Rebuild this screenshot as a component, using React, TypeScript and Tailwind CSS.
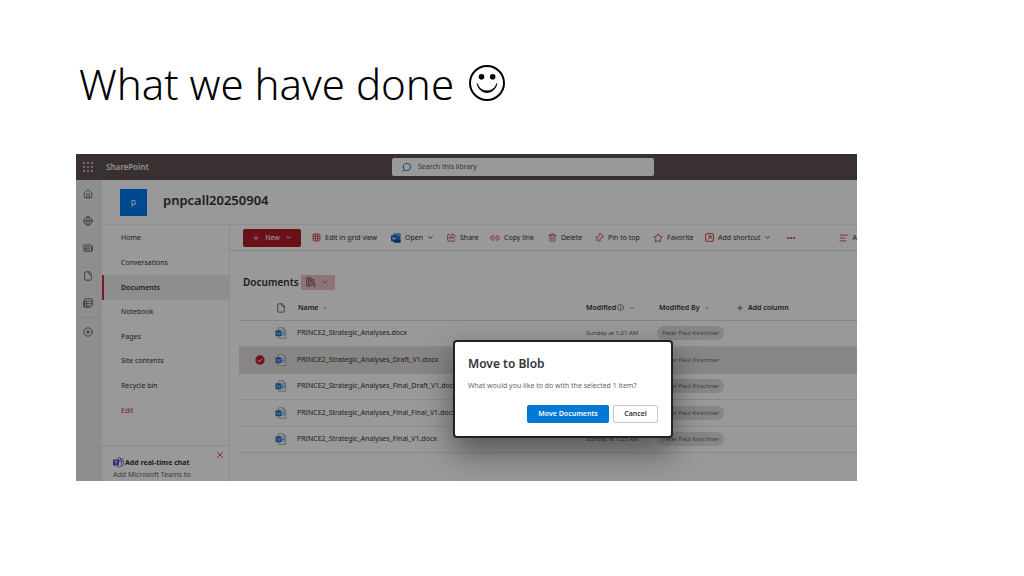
import type { ReactNode } from "react"
import {
  AlignLeft,
  ChevronDown,
  CirclePlus,
  Ellipsis,
  File,
  Globe,
  Grid3x3,
  House,
  Info,
  Link2,
  Pin,
  Plus,
  Search,
  Star,
  Trash2,
  X,
} from "lucide-react"

const navItems = [
  "Home",
  "Conversations",
  "Documents",
  "Notebook",
  "Pages",
  "Site contents",
  "Recycle bin",
  "Edit",
]

const files = [
  { name: "PRINCE2_Strategic_Analyses.docx", modified: "Sunday at 1:21 AM" },
  { name: "PRINCE2_Strategic_Analyses_Draft_V1.docx", selected: true },
  { name: "PRINCE2_Strategic_Analyses_Final_Draft_V1.docx" },
  { name: "PRINCE2_Strategic_Analyses_Final_Final_V1.docx" },
  { name: "PRINCE2_Strategic_Analyses_Final_V1.docx", modified: "Sunday at 1:23 AM" },
]

function Smiley() {
  return (
    <svg viewBox="0 0 38 38" className="size-[38px]" fill="none" stroke="black" aria-label="smile">
      <circle cx="19" cy="19" r="17" strokeWidth="2" />
      <circle cx="13.5" cy="12.8" r="2.8" fill="black" stroke="none" />
      <circle cx="24.700" cy="12.8" r="2.8" fill="black" stroke="none" />
      <path d="M9.200 19.500c.8 5.300 4.800 9 9.800 9s9-3.700 9.800-9c-1.600 4.800-5.200 7.400-9.800 7.400s-8.200-2.600-9.800-7.400z" fill="black" strokeWidth=".8" />
    </svg>
  )
}

function Waffle() {
  return (
    <svg viewBox="0 0 10 10" className="size-[10px]" fill="#e8e4e4">
      {[1, 5, 9].map((y) => [1, 5, 9].map((x) => <circle key={`${x}${y}`} cx={x} cy={y} r="0.9" />))}
    </svg>
  )
}

function News() {
  return (
    <svg viewBox="0 0 10 10" className="size-[10px]" fill="none" stroke="currentColor" strokeWidth=".8">
      <path d="M.6 3A1.200 1.200 0 0 1 1.800 1.800h5.400A1.200 1.200 0 0 1 8.400 3v5.400H1.800A1.200 1.200 0 0 1 .6 7.200z" />
      <path d="M8.400 3.200h.1a1 1 0 0 1 1 1v3.100a1.100 1.100 0 0 1-1.100 1.100M2 3.800h5M5.300 5.300H7M5.300 6.800H7" />
      <rect x="2.200" y="5.100" width="1.800" height="1.800" />
    </svg>
  )
}

function Lists() {
  return (
    <svg viewBox="0 0 10 10" className="size-[10px]" fill="none" stroke="currentColor" strokeWidth=".8">
      <rect x="1.400" y=".8" width="8" height="7.400" rx="1.200" />
      <path d="M1.400 3.200h8M1.400 5.700h8M3.600 3.200v5M.5 3v4.800A1.500 1.500 0 0 0 2 9.300h5.500" />
    </svg>
  )
}

function WordApp() {
  return (
    <svg viewBox="0 0 10 10" className="size-[10px]">
      <rect x="2.500" y="0.500" width="7" height="9" rx="0.800" fill="#2b7cd3" />
      <rect x="2.500" y="0.500" width="7" height="2.500" rx="0.800" fill="#50a9ef" />
      <rect x="2.500" y="6.500" width="7" height="3" rx="0.800" fill="#103f91" />
      <rect x="0" y="2.200" width="6" height="6" rx="0.700" fill="#185abd" />
      <path d="M1.300 3.800l.8 3 .9-2.800.9 2.800.8-3" stroke="#fff" strokeWidth=".5" fill="none" />
    </svg>
  )
}

function WordFile() {
  return (
    <svg viewBox="0 0 12 12" className="mx-auto size-[12px]">
      <path d="M3.500.8h4.700l2.500 2.500v7.900H3.500z" fill="#fff" stroke="#8a8a8a" strokeWidth=".7" />
      <path d="M8.200.8v2.500h2.500" fill="none" stroke="#8a8a8a" strokeWidth=".7" />
      <path d="M7 5h2.800M7 6.500h2.800M7 8h2.800" stroke="#41a5ee" strokeWidth=".9" />
      <rect x="0.500" y="3.300" width="6" height="6" rx="0.700" fill="#2368d0" />
      <path d="M1.700 4.900l.9 2.900.9-2.700.9 2.700.9-2.900" stroke="#fff" strokeWidth=".4" fill="none" />
    </svg>
  )
}

function Check() {
  return (
    <svg viewBox="0 0 10 10" className="mx-auto size-[10px]">
      <circle cx="5" cy="5" r="4.700" fill="#ba1f2f" />
      <path d="M2.900 5.200l1.500 1.500 2.800-3" stroke="#fff" strokeWidth="1" fill="none" />
    </svg>
  )
}

function Books() {
  return (
    <svg viewBox="0 0 10 10" className="size-[10px]" fill="none" stroke="#5c4a4a" strokeWidth=".8">
      <rect x=".6" y=".8" width="2.200" height="8.400" rx=".4" />
      <rect x="2.800" y=".8" width="2.200" height="8.400" rx=".4" />
      <path d="M5.600 2.800l1.700-.4 1.900 6.300-1.700.5z" />
    </svg>
  )
}

function ShareBox() {
  return (
    <svg viewBox="0 0 10 10" className="size-[9px]" fill="none" stroke="currentColor" strokeWidth=".9">
      <path d="M4 1.500H2A1.200 1.200 0 0 0 .8 2.700v5.200A1.200 1.200 0 0 0 2 9.100h5.300a1.200 1.200 0 0 0 1.200-1.200V7" />
      <path d="M6.200.8l3.200 2.700-3.200 2.700V4.600C4.600 4.600 3.500 5.200 2.800 6.600 3 4.200 4.200 2.700 6.200 2.500z" />
    </svg>
  )
}

function ShortcutBox() {
  return (
    <svg viewBox="0 0 10 10" className="size-[9px]" fill="none" stroke="currentColor" strokeWidth="1">
      <rect x=".7" y=".7" width="8.600" height="8.600" rx="1.500" />
      <path d="M3.200 6.800l3.400-3.400M3.700 3.300h3v3" />
    </svg>
  )
}

function Teams() {
  return (
    <svg viewBox="0 0 11 11" className="size-[11px]">
      <circle cx="6.200" cy="2" r="1.500" fill="#fff" stroke="#5059c9" strokeWidth=".8" />
      <circle cx="9.300" cy="2.500" r="1" fill="none" stroke="#5059c9" strokeWidth=".7" />
      <path d="M4 4.200h4.600v3.600a2.600 2.600 0 0 1-5 .8z" fill="#fff" stroke="#5059c9" strokeWidth=".8" />
      <path d="M8.600 4.400h1.900v2.700c0 1-.8 1.700-1.900 1.600" fill="none" stroke="#5059c9" strokeWidth=".7" />
      <rect x="0" y="2.600" width="6" height="6" rx=".6" fill="#4b53bc" />
      <path d="M1.500 4.200h3M3 4.200v3.200" stroke="#fff" strokeWidth=".8" />
    </svg>
  )
}

const commands: { label: string; icon: ReactNode; width: string; chevron?: boolean }[] = [
  { label: "Edit in grid view", icon: <Grid3x3 size={9} />, width: "w-[79px]" },
  { label: "Open", icon: <WordApp />, width: "w-[56px]", chevron: true },
  { label: "Share", icon: <ShareBox />, width: "w-[43px]" },
  { label: "Copy link", icon: <Link2 size={10} />, width: "w-[58px]" },
  { label: "Delete", icon: <Trash2 size={9} />, width: "w-[46px]" },
  { label: "Pin to top", icon: <Pin size={10} className="rotate-45" />, width: "w-[59px]" },
  { label: "Favorite", icon: <Star size={10} />, width: "w-[52px]" },
  { label: "Add shortcut", icon: <ShortcutBox />, width: "w-[81px]", chevron: true },
]

function TopBar() {
  return (
    <header className="flex h-[26px] items-center bg-[#605352] pl-[7px]">
      <button aria-label="App launcher">
        <Waffle />
      </button>
      <span className="ml-[13px] w-[286px] text-[8px] font-semibold text-[#f0eded]">SharePoint</span>
      <label className="flex h-[18px] w-[262px] items-center gap-[6px] rounded-xs bg-white pl-[9px]">
        <Search size={11} strokeWidth={2} className="shrink-0 -scale-x-100 text-[#0f6cbd]" />
        <input
          type="search"
          aria-label="Search this library"
          placeholder="Search this library"
          className="w-full outline-none placeholder:text-[#555]"
        />
      </label>
    </header>
  )
}

function Rail() {
  const icons = [
    { label: "Home", icon: <House size={10} /> },
    { label: "Sites", icon: <Globe size={10} /> },
    { label: "News", icon: <News /> },
    { label: "Files", icon: <File size={10} /> },
    { label: "Lists", icon: <Lists /> },
  ]
  return (
    <aside className="w-[26px] shrink-0 bg-[#ededed] pr-[2px] text-[#555]">
      <div className="flex h-[138px] flex-col justify-around border-b border-[#ddd]">
        {icons.map((item) => (
          <button key={item.label} className="mx-auto" aria-label={item.label}>
            {item.icon}
          </button>
        ))}
      </div>
      <button className="mx-auto mt-[9px] block" aria-label="Create">
        <CirclePlus size={10} />
      </button>
    </aside>
  )
}

function SideNav() {
  return (
    <div className="w-[128px] shrink-0 border-r border-[#ededed]">
      <nav className="flex h-[198px] flex-col pt-px">
        {navItems.map((item) => (
          <a
            key={item}
            href="#"
            className={
              item === "Documents"
                ? "flex flex-1 items-center border-l-2 border-[#c5303c] bg-[#ededed] pl-[17px] font-semibold"
                : item === "Edit"
                  ? "flex flex-1 items-center pl-[19px] text-[#c5303c]"
                  : "flex flex-1 items-center pl-[19px]"
            }
          >
            {item}
          </a>
        ))}
      </nav>
      <div className="mt-[22px] h-[36px] border-t border-[#e6e6e6] pl-[11px]">
        <div className="flex h-[24px] justify-between pr-[4px]">
          <h3 className="flex items-center gap-px pt-[9px] font-bold">
            <Teams />
            Add real-time chat
          </h3>
          <button aria-label="Dismiss" className="self-start pt-[4px] text-[#c5303c]">
            <X size={10} />
          </button>
        </div>
        <p className="text-[#666]">Add Microsoft Teams to</p>
      </div>
    </div>
  )
}

function CommandBar() {
  return (
    <div className="flex h-[26px] items-center border-b border-[#e3e3e3] pl-[13px] whitespace-nowrap shadow-xs">
      <button className="mr-[11px] flex h-[18px] w-[58px] shrink-0 items-center justify-center gap-[5px] rounded-xs bg-[#b01c28] text-white">
        <Plus size={8} />
        New
        <ChevronDown size={7} strokeWidth={3} />
      </button>
      {commands.map((command) => (
        <button key={command.label} className={`flex shrink-0 items-center gap-[4px] ${command.width}`}>
          <span className="text-[#c5303c]">{command.icon}</span>
          {command.label}
          {command.chevron && <ChevronDown size={7} strokeWidth={3} />}
        </button>
      ))}
      <button aria-label="More" className="text-[#c5303c]">
        <Ellipsis size={10} strokeWidth={3} />
      </button>
      <button className="ml-auto flex items-center gap-[4px]">
        <AlignLeft size={10} className="text-[#c5303c]" />A
      </button>
    </div>
  )
}

function Library() {
  return (
    <main className="pl-[9px]">
      <div className="mt-[22px] flex h-[18px] items-center gap-[2px] pl-[4px]">
        <h2 className="text-[10px] font-semibold">Documents</h2>
        <button aria-label="Views" className="flex h-[15px] w-[34px] items-center justify-center gap-[5px] bg-[#ecc4c6]">
          <Books />
          <ChevronDown size={8} className="text-[#555]" />
        </button>
      </div>
      <table className="mt-[5px] h-[157px] w-full table-fixed text-left">
        <thead>
          <tr className="h-[24px] border-b border-[#dadada]">
            <th className="w-[31px]" />
            <th className="w-[22px]">
              <File size={10} className="mx-auto text-[#555]" />
            </th>
            <th className="w-[294px] pl-[6px] font-semibold">
              <span className="flex items-center gap-[4px]">
                Name <ChevronDown size={6} />
              </span>
            </th>
            <th className="w-[71px] font-semibold">
              <span className="flex items-center gap-px">
                Modified <Info size={7} /> <ChevronDown size={6} className="ml-[4px]" />
              </span>
            </th>
            <th className="w-[79px] pl-[2px] font-semibold">
              <span className="flex items-center gap-[4px]">
                Modified By <ChevronDown size={6} />
              </span>
            </th>
            <th className="font-semibold">
              <button className="flex items-center gap-[4px]">
                <Plus size={8} /> Add column
              </button>
            </th>
          </tr>
        </thead>
        <tbody>
          {files.map((file) => (
            <tr
              key={file.name}
              className={file.selected ? "h-[26px] border-b border-[#e3e0dd] bg-[#e3e0dd]" : "h-[26px] border-b border-[#eaeaea]"}
            >
              <td className="pl-[10px]">{file.selected && <Check />}</td>
              <td>
                <WordFile />
              </td>
              <td className="pl-[5px]">
                <a href="#">{file.name}</a>
              </td>
              <td className="text-[6px] text-[#666]">{file.modified}</td>
              <td className="text-[6px]">
                <span className="rounded-full bg-[#e3e0dd] px-[5px] py-[3px] text-[#666]">Peter Paul Kirschner</span>
              </td>
              <td />
            </tr>
          ))}
        </tbody>
      </table>
    </main>
  )
}

function MoveDialog() {
  return (
    <div
      role="dialog"
      aria-labelledby="dialog-title"
      className="absolute top-[186px] left-[377px] w-[220px] rounded-sm border-2 border-[#222] bg-white px-[13px] pt-[12px] pb-[13px] shadow-[0_14px_32px_rgba(0,0,0,0.45)]"
    >
      <h2 id="dialog-title" className="text-[12px] leading-[20px] font-semibold text-[#333]">
        Move to Blob
      </h2>
      <p className="mt-[7px] text-[#666]">What would you like to do with the selected 1 item?</p>
      <div className="mt-[14px] flex justify-end gap-[4px] font-semibold">
        <button className="h-[18px] w-[82px] rounded-xs bg-[#0078d4] text-white">Move Documents</button>
        <button className="h-[18px] w-[45px] rounded-xs border border-[#c8c8c8]">Cancel</button>
      </div>
    </div>
  )
}

export default function App() {
  return (
    <div className="min-h-screen bg-white pt-[58px] pr-[167px] pl-[76px] font-['Noto_Sans',sans-serif]">
      <h1 className="flex h-[50px] items-center gap-[14px] pl-[3px] text-[42px] font-light text-black">
        What we have done
        <Smiley />
      </h1>
      <section className="relative mt-[46px] text-[7px] leading-[10px] text-[#333]">
        <div className="overflow-hidden">
          <TopBar />
          <div className="flex">
            <Rail />
            <div className="min-w-0 flex-1">
              <div className="flex h-[45px] items-center gap-[16px] border-b border-[#ededed] pl-[18px]">
                <div className="flex size-[27px] items-center justify-center bg-[#0078f0] text-[9px] text-white">p</div>
                <h2 className="pb-[4px] text-[13px] leading-[18px] font-semibold">pnpcall20250904</h2>
              </div>
              <div className="flex">
                <SideNav />
                <div className="min-w-0 flex-1">
                  <CommandBar />
                  <Library />
                </div>
              </div>
            </div>
          </div>
        </div>
        <div className="absolute inset-0 bg-black/40" />
        <MoveDialog />
      </section>
    </div>
  )
}
